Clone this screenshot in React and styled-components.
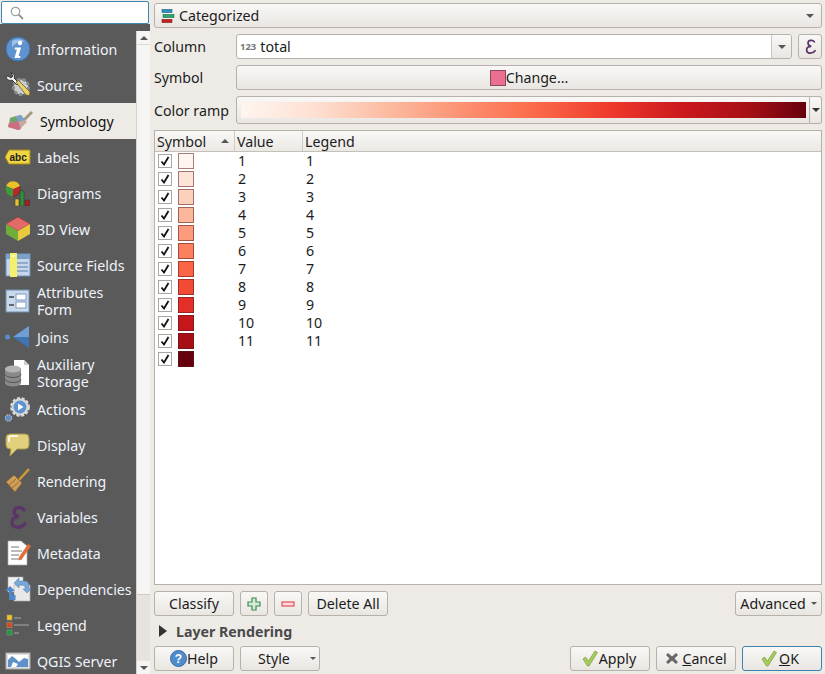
import React from 'react';
import styled, { createGlobalStyle } from 'styled-components';

const GlobalStyle = createGlobalStyle`
  html, body {
    margin: 0;
    padding: 0;
    height: 100%;
    overflow: hidden;
    background: #eeebe7;
  }
  #root {
    height: 100%;
  }
  * {
    box-sizing: border-box;
  }
`;

const Page = styled.div`
  display: flex;
  width: 825px;
  height: 674px;
  overflow: hidden;
  font-family: "Noto Sans", "Open Sans", sans-serif;
  font-size: 14.2px;
  color: #1c1c1c;
  background: #eeebe7;
`;

const LeftColumn = styled.div`
  display: flex;
  flex-direction: column;
  width: 150px;
  flex: none;
  background: #5a5a5a;
`;

const SearchArea = styled.div`
  background: #eeebe7;
  padding: 1px 1px 0 1px;
  height: 24px;
  flex: none;
`;

const SearchBox = styled.div`
  display: flex;
  align-items: center;
  height: 23px;
  padding-left: 8px;
  background: #fff;
  border: 1px solid #3f87ad;
  border-radius: 2px;
`;

const SideBody = styled.div`
  display: flex;
  flex: 1;
  min-height: 0;
  padding-top: 7px;
`;

const SideList = styled.div`
  width: 136px;
  flex: none;
  overflow: hidden;
`;

const SideItem = styled.div`
  display: flex;
  align-items: center;
  height: 36px;
  gap: ${p => (p.$active ? '7px' : '6px')};
  padding-left: ${p => (p.$active ? '7px' : '5px')};
  background: ${p => (p.$active ? '#eeebe7' : 'transparent')};
  color: ${p => (p.$active ? '#101010' : '#eef3fa')};
  line-height: 17px;
  white-space: nowrap;
  svg {
    flex: none;
  }
`;

const SideScroll = styled.div`
  width: 14px;
  flex: none;
  display: flex;
  flex-direction: column;
  background: #e7e4e0;
  border-left: 1px solid #d6d3ce;
`;

const ScrollArrow = styled.div`
  height: 13px;
  flex: none;
  display: flex;
  align-items: center;
  justify-content: center;
  background: #f6f5f3;
  &::before {
    content: "";
    border-left: 4px solid transparent;
    border-right: 4px solid transparent;
    ${p => (p.$down ? 'border-top' : 'border-bottom')}: 4px solid #555;
  }
`;

const ScrollThumb = styled.div`
  height: 551px;
  flex: none;
  background: #f6f5f3;
  border-top: 1px solid #dcd9d5;
  border-bottom: 1px solid #cfccc7;
`;

const ScrollGap = styled.div`
  flex: 1;
`;

const Main = styled.div`
  flex: 1;
  min-width: 0;
  display: flex;
  flex-direction: column;
  padding: 3px 3px 3px 4px;
`;

const Button = styled.div`
  display: flex;
  align-items: center;
  justify-content: center;
  flex: ${p => (p.$grow ? 1 : 'none')};
  width: ${p => (p.$w ? `${p.$w}px` : 'auto')};
  height: ${p => p.$h || 25}px;
  gap: ${p => p.$gap || 0}px;
  padding-right: ${p => p.$pr || 0}px;
  background: linear-gradient(#f9f8f6, #e9e6e2);
  border: 1px solid ${p => (p.$focus ? '#3d82b0' : '#b6b2ab')};
  border-radius: 3px;
  color: #1c1c1c;
  white-space: nowrap;
`;

const ComboBar = styled(Button)`
  justify-content: space-between;
  padding: 0 7px 0 6px;
  margin-bottom: 6px;
`;

const ComboLabel = styled.span`
  display: flex;
  align-items: center;
  gap: 4px;
`;

const Caret = styled.span`
  display: inline-block;
  width: 0;
  height: 0;
  border-left: ${p => p.$size || 4}px solid transparent;
  border-right: ${p => p.$size || 4}px solid transparent;
  border-top: ${p => p.$size || 4}px solid ${p => p.$color || '#555'};
`;

const FormRow = styled.div`
  display: flex;
  align-items: center;
  height: ${p => p.$h || 25}px;
  margin-bottom: ${p => p.$mb ?? 6}px;
`;

const FormLabel = styled.div`
  width: 82px;
  flex: none;
`;

const FieldBox = styled.div`
  flex: 1;
  display: flex;
  align-items: stretch;
  height: 25px;
  background: #fff;
  border: 1px solid #b6b2ab;
  border-radius: 3px;
  overflow: hidden;
`;

const FieldValue = styled.div`
  flex: 1;
  display: flex;
  align-items: center;
  gap: 4px;
  padding-left: 3px;
`;

const TypeTag = styled.span`
  font-size: 9.5px;
  font-weight: 700;
  color: #777;
`;

const FieldDrop = styled.div`
  width: 20px;
  display: flex;
  align-items: center;
  justify-content: center;
  border-left: 1px solid #c9c6c0;
  background: linear-gradient(#f9f8f6, #e9e6e2);
`;

const ExprButton = styled(Button)`
  margin-left: 6px;
`;

const Swatch = styled.span`
  display: block;
  width: 16px;
  height: 16px;
  background: ${p => p.$color};
  border: 1px solid ${p => p.$edge || 'rgba(90, 30, 30, 0.55)'};
`;

const RampButton = styled.div`
  flex: 1;
  height: 28px;
  display: flex;
  padding: 5px 3px 5px 4px;
  background: linear-gradient(#f9f8f6, #e9e6e2);
  border: 1px solid #b6b2ab;
  border-radius: 3px 0 0 3px;
`;

const RampFill = styled.div`
  flex: 1;
  background: linear-gradient(to right, #fff5f0 0%, #fee0d2 13%, #fcbba1 26%, #fc9272 39%, #fb6a4a 52%, #ef3b2c 65%, #cb181d 78%, #a50f15 90%, #67000d 100%);
`;

const RampDrop = styled.div`
  width: 12px;
  height: 28px;
  flex: none;
  display: flex;
  align-items: center;
  justify-content: center;
  background: linear-gradient(#f9f8f6, #e9e6e2);
  border: 1px solid #b6b2ab;
  border-left: none;
  border-radius: 0 3px 3px 0;
`;

const TableFrame = styled.div`
  flex: 1;
  min-height: 0;
  background: #fff;
  border: 1px solid #b6b2ab;
  display: flex;
  flex-direction: column;
`;

const TableHead = styled.div`
  display: grid;
  grid-template-columns: 79px 68px 1fr;
  height: 21px;
  flex: none;
  background: linear-gradient(#f9f8f6, #ebe8e4);
  border-bottom: 1px solid #c4c1bb;
`;

const HeadCell = styled.div`
  display: flex;
  align-items: center;
  justify-content: space-between;
  padding: 0 5px 0 2px;
  border-left: ${p => (p.$first ? 'none' : '1px solid #cfccc7')};
`;

const SortMark = styled.span`
  width: 0;
  height: 0;
  border-left: 4px solid transparent;
  border-right: 4px solid transparent;
  border-bottom: 4px solid #555;
`;

const TableRow = styled.div`
  display: grid;
  grid-template-columns: 79px 68px 1fr;
  height: 18px;
  align-items: center;
`;

const SymbolCell = styled.div`
  display: flex;
  align-items: center;
  gap: 6px;
  padding-left: 3px;
`;

const CheckBox = styled.span`
  display: flex;
  align-items: center;
  justify-content: center;
  width: 14px;
  height: 14px;
  background: #fff;
  border: 1px solid #aaa7a1;
`;

const TextCell = styled.div`
  padding-left: 4px;
  line-height: 18px;
`;

const ActionRow = styled.div`
  display: flex;
  align-items: center;
  gap: 6px;
  margin-top: 6px;
  height: 25px;
  flex: none;
`;

const Spacer = styled.div`
  flex: 1;
`;

const CollapseRow = styled.div`
  display: flex;
  align-items: center;
  gap: 9px;
  height: 30px;
  padding-left: 5px;
  font-weight: 700;
  color: #4a4a4a;
  flex: none;
`;

const CollapseMark = styled.span`
  width: 0;
  height: 0;
  border-top: 6px solid transparent;
  border-bottom: 6px solid transparent;
  border-left: 8px solid #333;
`;

const BottomRow = styled.div`
  display: flex;
  align-items: center;
  gap: 6px;
  height: 25px;
  flex: none;
`;

const StyleButton = styled(Button)`
  justify-content: flex-start;
  padding-left: 17px;
  gap: 20px;
`;

const Mnemonic = styled.span`
  text-decoration: underline;
`;

const SearchIcon = () => (
  <svg width="14" height="14" viewBox="0 0 14 14" fill="none">
    <circle cx="5.5" cy="5.5" r="4.2" stroke="#a0a0a0" strokeWidth="1.3" />
    <path d="M8.7 8.7 13 13" stroke="#909090" strokeWidth="1.8" />
  </svg>
);

const InfoIcon = () => (
  <svg width="26" height="26" viewBox="0 0 26 26">
    <circle cx="13" cy="13" r="12" fill="#5f93cf" stroke="#3c6ea8" />
    <path d="M7 5a9 7 0 0 1 13 1c-4-1-9 0-13 5z" fill="#9dc0e6" />
    <circle cx="15" cy="7" r="2.2" fill="#fff" />
    <path d="M10 11.5h6l-2.4 8.5h2l-.6 2H9.5l2.4-8.5H9.6z" fill="#fff" />
  </svg>
);

const SourceIcon = () => (
  <svg width="26" height="26" viewBox="0 0 26 26">
    <circle cx="16" cy="15" r="7.5" fill="#d4d6d8" stroke="#8a8d90" strokeWidth="3" strokeDasharray="3.4 1.8" />
    <circle cx="16" cy="15" r="6" fill="#c9ccd0" />
    <path d="M1 5c1 3 4 4 6 3l5 5 2-2-5-5c1-2 0-5-3-5l2 3-2 2-3-2z" fill="#f2f2f2" stroke="#222" strokeWidth=".8" />
    <path d="M11 10l2.500-1.500L25 20l-.5 3.500L21 23z" fill="#e8d36e" stroke="#6b5a20" strokeWidth=".8" />
  </svg>
);

const SymbologyIcon = () => (
  <svg width="26" height="24" viewBox="0 0 26 24">
    <path d="M15 13 25 3" stroke="#a09a80" strokeWidth="3" />
    <path d="M3 9 14 6l6 7-8 8-11-3z" fill="#c9a79a" />
    <path d="M3 9l6-2 2 5-8 2z" fill="#6aa76a" />
    <path d="M9 7l5-1 4 5-7 2z" fill="#7ba0cf" />
    <path d="M2 14l9-2 3 8-3 1-10-3z" fill="#c96f80" />
  </svg>
);

const LabelsIcon = () => (
  <svg width="26" height="16" viewBox="0 0 26 16">
    <path d="M4 1h21v14H4L0 8z" fill="#efd443" stroke="#a08c1c" />
    <text x="4.5" y="11.5" fontFamily="Liberation Sans" fontWeight="700" fontSize="10" fill="#222">abc</text>
  </svg>
);

const DiagramsIcon = () => (
  <svg width="26" height="26" viewBox="0 0 26 26">
    <circle cx="8" cy="9" r="7.5" fill="#b8282a" stroke="#333" strokeWidth=".6" />
    <path d="M8 9 1 6a7.5 7.5 0 0 1 14 0z" fill="#e9c22b" />
    <path d="M8 9V16.5A7.5 7.5 0 0 1 1 6z" fill="#3f9a3f" />
    <rect x="10" y="19" width="4" height="7" fill="#e9c22b" stroke="#333" strokeWidth=".5" />
    <rect x="15" y="11" width="4" height="15" fill="#2f8f3c" stroke="#333" strokeWidth=".5" />
    <rect x="20" y="20" width="4.5" height="6" fill="#a81e1e" stroke="#333" strokeWidth=".5" />
  </svg>
);

const ThreeDIcon = () => (
  <svg width="26" height="26" viewBox="0 0 26 26">
    <path d="M13 1 25 8 13 15 1 8z" fill="#e46a6a" stroke="#a33" strokeWidth=".6" />
    <path d="M1 8l12 7v10L1 18z" fill="#6fae3a" />
    <path d="M25 8 13 15v10l12-7z" fill="#e8cb3c" />
  </svg>
);

const FieldsIcon = () => (
  <svg width="26" height="26" viewBox="0 0 26 26">
    <rect x="1" y="2" width="24" height="22" fill="#c7d6e9" stroke="#6d90b8" />
    <rect x="1" y="2" width="24" height="5" fill="#7ba0cb" />
    <path d="M11 11h12M11 15h12M11 19h12" stroke="#7d9cc0" strokeWidth="1.5" />
    <rect x="5" y="1" width="7" height="24" fill="#f5f06c" />
    <rect x="7.5" y="3" width="2" height="2" fill="#fff" />
  </svg>
);

const FormIcon = () => (
  <svg width="26" height="24" viewBox="0 0 26 24">
    <rect x="1" y="1" width="23" height="22" fill="#c9d8ea" stroke="#6d90b8" />
    <rect x="11" y="5" width="10" height="6" fill="#fff" stroke="#7d9cc0" />
    <rect x="11" y="13" width="10" height="6" fill="#fff" stroke="#7d9cc0" />
    <path d="M4 8h5M4 16h5" stroke="#444" strokeWidth="1.5" />
  </svg>
);

const JoinsIcon = () => (
  <svg width="26" height="22" viewBox="0 0 26 22">
    <circle cx="2.5" cy="11" r="2.5" fill="#5b8ec9" />
    <path d="M24 0v22L8 11z" fill="#3f74b2" />
    <path d="M24 0v11H8z" fill="#6f9ed3" />
  </svg>
);

const StorageIcon = () => (
  <svg width="26" height="28" viewBox="0 0 26 28">
    <path d="M9 1h10l5 5v20H9z" fill="#fff" />
    <path d="M19 1l5 5h-5z" fill="#cfcfcf" />
    <path d="M0 9h16v15a8 3.500 0 0 1-16 0z" fill="#8a8a8a" />
    <ellipse cx="8" cy="10" rx="8" ry="3.500" fill="#b5b5b5" />
    <path d="M0 15a8 3.500 0 0 0 16 0M0 20a8 3.500 0 0 0 16 0" fill="none" stroke="#555" />
  </svg>
);

const ActionsIcon = () => (
  <svg width="26" height="26" viewBox="0 0 26 26">
    <circle cx="15" cy="11" r="8.500" fill="#dcdcdc" stroke="#d8d8d8" strokeWidth="2.800" strokeDasharray="3 1.6" />
    <circle cx="15" cy="11" r="6.500" fill="#5f93cf" />
    <path d="M13 7.500l5.500 3.500-5.500 3.500z" fill="#fff" />
    <circle cx="3.500" cy="22" r="3.200" fill="#5f8ec6" stroke="#bbb" strokeWidth="1.200" strokeDasharray="1.500 1" />
  </svg>
);

const DisplayIcon = () => (
  <svg width="26" height="24" viewBox="0 0 26 24">
    <path d="M5 1h15a4 4 0 0 1 4 4v7a4 4 0 0 1-4 4H12l-7 7 1-7H5a4 4 0 0 1-4-4V5a4 4 0 0 1 4-4z" fill="#e2d17c" stroke="#a99a48" />
    <path d="M4 9V5a2 2 0 0 1 2-2h7" stroke="#fff" strokeWidth="1.6" fill="none" />
  </svg>
);

const RenderingIcon = () => (
  <svg width="26" height="26" viewBox="0 0 26 26">
    <path d="M14 12 24 1" stroke="#cf9a35" strokeWidth="2.600" />
    <path d="M1 14l8-7 8 8-7 9z" fill="#cf9f5c" stroke="#8a5d20" strokeWidth=".7" />
    <path d="M4 17l7-6M7 20l7-6" stroke="#8a5d20" strokeWidth=".8" />
  </svg>
);

const EpsilonGlyph = ({ size, width = 3 }) => (
  <svg width={size} height={size} viewBox="0 0 24 24" fill="none">
    <path
      d="M17.500 5.500C15.500 2.500 8.500 2.500 8.500 7 8.500 10 10.500 11.200 13 11.700 8.500 11.700 6.500 14 6.500 17 6.500 22.500 15 23 18.500 18"
      stroke="#5c3568"
      strokeWidth={width}
      strokeLinecap="round"
    />
  </svg>
);

const VariablesIcon = () => <EpsilonGlyph size={26} />;

const MetadataIcon = () => (
  <svg width="26" height="26" viewBox="0 0 26 26">
    <path d="M3 1h13l6 5v19H3z" fill="#fff" stroke="#aaa" strokeWidth=".7" />
    <path d="M6 7h8M6 11h11M6 15h8M6 19h11" stroke="#777" />
    <path d="M14 17 23 4l3 2-9 13-3.500 1.500z" fill="#e0703a" />
  </svg>
);

const DependenciesIcon = () => (
  <svg width="26" height="26" viewBox="0 0 26 26">
    <rect x="3" y="1" width="15" height="15" fill="#f0f0f0" stroke="#aaa" strokeWidth=".6" />
    <rect x="9" y="9" width="16" height="16" fill="#e8e8e8" stroke="#aaa" strokeWidth=".6" />
    <path d="M9 7l5-5v3h5q5 0 5 5v3h2l-4 4-4-4h2v-2q0-2-3-2h-3v3z" fill="#7ba6d8" stroke="#4f7fb8" strokeWidth=".5" />
    <path d="M0 15l5-5 5 5H7.500v4h3v5H4v-9z" fill="#4f86c6" />
  </svg>
);

const LegendIcon = () => (
  <svg width="26" height="22" viewBox="0 0 26 22">
    <rect x="2" y="1" width="5" height="5" fill="#f2c21c" stroke="#997" strokeWidth=".6" />
    <rect x="2" y="8.500" width="5" height="5" fill="#e0401c" stroke="#997" strokeWidth=".6" />
    <rect x="2" y="16" width="5" height="5" fill="#1f9a3e" stroke="#797" strokeWidth=".6" />
    <path d="M9 4h7M9 11h15M9 19h5" stroke="#8f8f8f" strokeWidth="1.600" />
  </svg>
);

const ServerIcon = () => (
  <svg width="26" height="18" viewBox="0 0 26 18">
    <rect x="1" y="1" width="24" height="16" fill="#dde0e3" stroke="#aaa" />
    <rect x="3" y="3" width="20" height="12" fill="#fff" />
    <path d="M3 8l4-4 4 3 3 3 5-4 4 1v8H3z" fill="#5f90c8" />
    <path d="M8 10l5 2-2 3H6z" fill="#fff" />
  </svg>
);

const CategorizedIcon = () => (
  <svg width="14" height="14" viewBox="0 0 14 14">
    <rect x="1" y="0.500" width="10" height="3" fill="#2c8fc0" stroke="#1c5f80" strokeWidth=".6" />
    <rect x="2" y="5.500" width="11" height="3" fill="#2da56a" stroke="#1c7046" strokeWidth=".6" />
    <rect x="1" y="10.500" width="10" height="3" fill="#c0211f" stroke="#801513" strokeWidth=".6" />
  </svg>
);

const Tick = () => (
  <svg width="10" height="10" viewBox="0 0 10 10" fill="none">
    <path d="M1.500 5.500 4 8.500 8.500 1" stroke="#111" strokeWidth="1.800" />
  </svg>
);

const PlusIcon = () => (
  <svg width="14" height="14" viewBox="0 0 14 14">
    <path d="M5 1h4v4h4v4H9v4H5V9H1V5h4z" fill="#d5ecd8" stroke="#3f8a50" strokeWidth="1.200" />
  </svg>
);

const MinusIcon = () => (
  <svg width="14" height="6" viewBox="0 0 14 6">
    <rect x="1" y="1" width="12" height="4" fill="#fbdcdc" stroke="#e2505a" strokeWidth="1.200" />
  </svg>
);

const HelpIcon = () => (
  <svg width="17" height="17" viewBox="0 0 17 17">
    <circle cx="8.500" cy="8.500" r="8" fill="#4f8ccb" stroke="#356da8" />
    <text x="8.500" y="13" textAnchor="middle" fontFamily="Liberation Sans" fontWeight="700" fontSize="12" fill="#fff">?</text>
  </svg>
);

const CheckIcon = () => (
  <svg width="16" height="17" viewBox="0 0 16 17">
    <path d="M1 9l2.500-2 3 4L13 1l2.500 1.500L7 16h-1.500z" fill="#a6cc5c" stroke="#7a9c3c" strokeWidth=".7" />
  </svg>
);

const CrossIcon = () => (
  <svg width="14" height="13" viewBox="0 0 14 13">
    <path d="M1 3l2-2 4 3.500L11 1l2 2-3.500 3.500L13 10l-2 2-4-3.500L3 12l-2-2 3.500-3.500z" fill="#666" />
  </svg>
);

const navItems = [
  { label: 'Information', Icon: InfoIcon },
  { label: 'Source', Icon: SourceIcon },
  { label: 'Symbology', Icon: SymbologyIcon, active: true },
  { label: 'Labels', Icon: LabelsIcon },
  { label: 'Diagrams', Icon: DiagramsIcon },
  { label: '3D View', Icon: ThreeDIcon },
  { label: 'Source Fields', Icon: FieldsIcon },
  { label: <>Attributes<br />Form</>, Icon: FormIcon },
  { label: 'Joins', Icon: JoinsIcon },
  { label: <>Auxiliary<br />Storage</>, Icon: StorageIcon },
  { label: 'Actions', Icon: ActionsIcon },
  { label: 'Display', Icon: DisplayIcon },
  { label: 'Rendering', Icon: RenderingIcon },
  { label: 'Variables', Icon: VariablesIcon },
  { label: 'Metadata', Icon: MetadataIcon },
  { label: 'Dependencies', Icon: DependenciesIcon },
  { label: 'Legend', Icon: LegendIcon },
  { label: 'QGIS Server', Icon: ServerIcon },
];

const classes = [
  ['1', '#fff5f0'],
  ['2', '#fee3d7'],
  ['3', '#fdd0bc'],
  ['4', '#fcb69b'],
  ['5', '#fc9c7d'],
  ['6', '#fb8060'],
  ['7', '#fa6547'],
  ['8', '#f34a36'],
  ['9', '#e32f27'],
  ['10', '#c5161b'],
  ['11', '#a50f15'],
  ['', '#67000d'],
];

export default function App() {
  return (
    <Page>
      <GlobalStyle />
      <LeftColumn>
        <SearchArea>
          <SearchBox><SearchIcon /></SearchBox>
        </SearchArea>
        <SideBody>
          <SideList>
            {navItems.map(({ label, Icon, active }, i) => (
              <SideItem key={i} $active={active}>
                <Icon />
                <span>{label}</span>
              </SideItem>
            ))}
          </SideList>
          <SideScroll>
            <ScrollArrow />
            <ScrollThumb />
            <ScrollGap />
            <ScrollArrow $down />
          </SideScroll>
        </SideBody>
      </LeftColumn>

      <Main>
        <ComboBar>
          <ComboLabel><CategorizedIcon />Categorized</ComboLabel>
          <Caret />
        </ComboBar>

        <FormRow>
          <FormLabel>Column</FormLabel>
          <FieldBox>
            <FieldValue><TypeTag>123</TypeTag>total</FieldValue>
            <FieldDrop><Caret /></FieldDrop>
          </FieldBox>
          <ExprButton $w={24}><EpsilonGlyph size={17} width={2.4} /></ExprButton>
        </FormRow>

        <FormRow>
          <FormLabel>Symbol</FormLabel>
          <Button $grow>
            <Swatch $color="#ea6f90" $edge="#8a4a5c" />Change...
          </Button>
        </FormRow>

        <FormRow $h={28}>
          <FormLabel>Color ramp</FormLabel>
          <RampButton><RampFill /></RampButton>
          <RampDrop><Caret $color="#333" /></RampDrop>
        </FormRow>

        <TableFrame>
          <TableHead>
            <HeadCell $first>Symbol<SortMark /></HeadCell>
            <HeadCell>Value</HeadCell>
            <HeadCell>Legend</HeadCell>
          </TableHead>
          {classes.map(([value, color], i) => (
            <TableRow key={i}>
              <SymbolCell>
                <CheckBox><Tick /></CheckBox>
                <Swatch $color={color} />
              </SymbolCell>
              <TextCell>{value}</TextCell>
              <TextCell>{value}</TextCell>
            </TableRow>
          ))}
        </TableFrame>

        <ActionRow>
          <Button $w={80}>Classify</Button>
          <Button $w={28}><PlusIcon /></Button>
          <Button $w={28}><MinusIcon /></Button>
          <Button $w={80}>Delete All</Button>
          <Spacer />
          <Button $w={87} $gap={5}>Advanced<Caret $size={3} /></Button>
        </ActionRow>

        <CollapseRow><CollapseMark />Layer Rendering</CollapseRow>

        <BottomRow>
          <Button $w={80}><HelpIcon />Help</Button>
          <StyleButton $w={80}>Style<Caret $size={3} /></StyleButton>
          <Spacer />
          <Button $w={80} $gap={1} $pr={2}><CheckIcon />Apply</Button>
          <Button $w={80} $gap={3}><CrossIcon /><span><Mnemonic>C</Mnemonic>ancel</span></Button>
          <Button $w={80} $gap={2} $pr={4} $focus><CheckIcon /><span><Mnemonic>O</Mnemonic>K</span></Button>
        </BottomRow>
      </Main>
    </Page>
  );
}
